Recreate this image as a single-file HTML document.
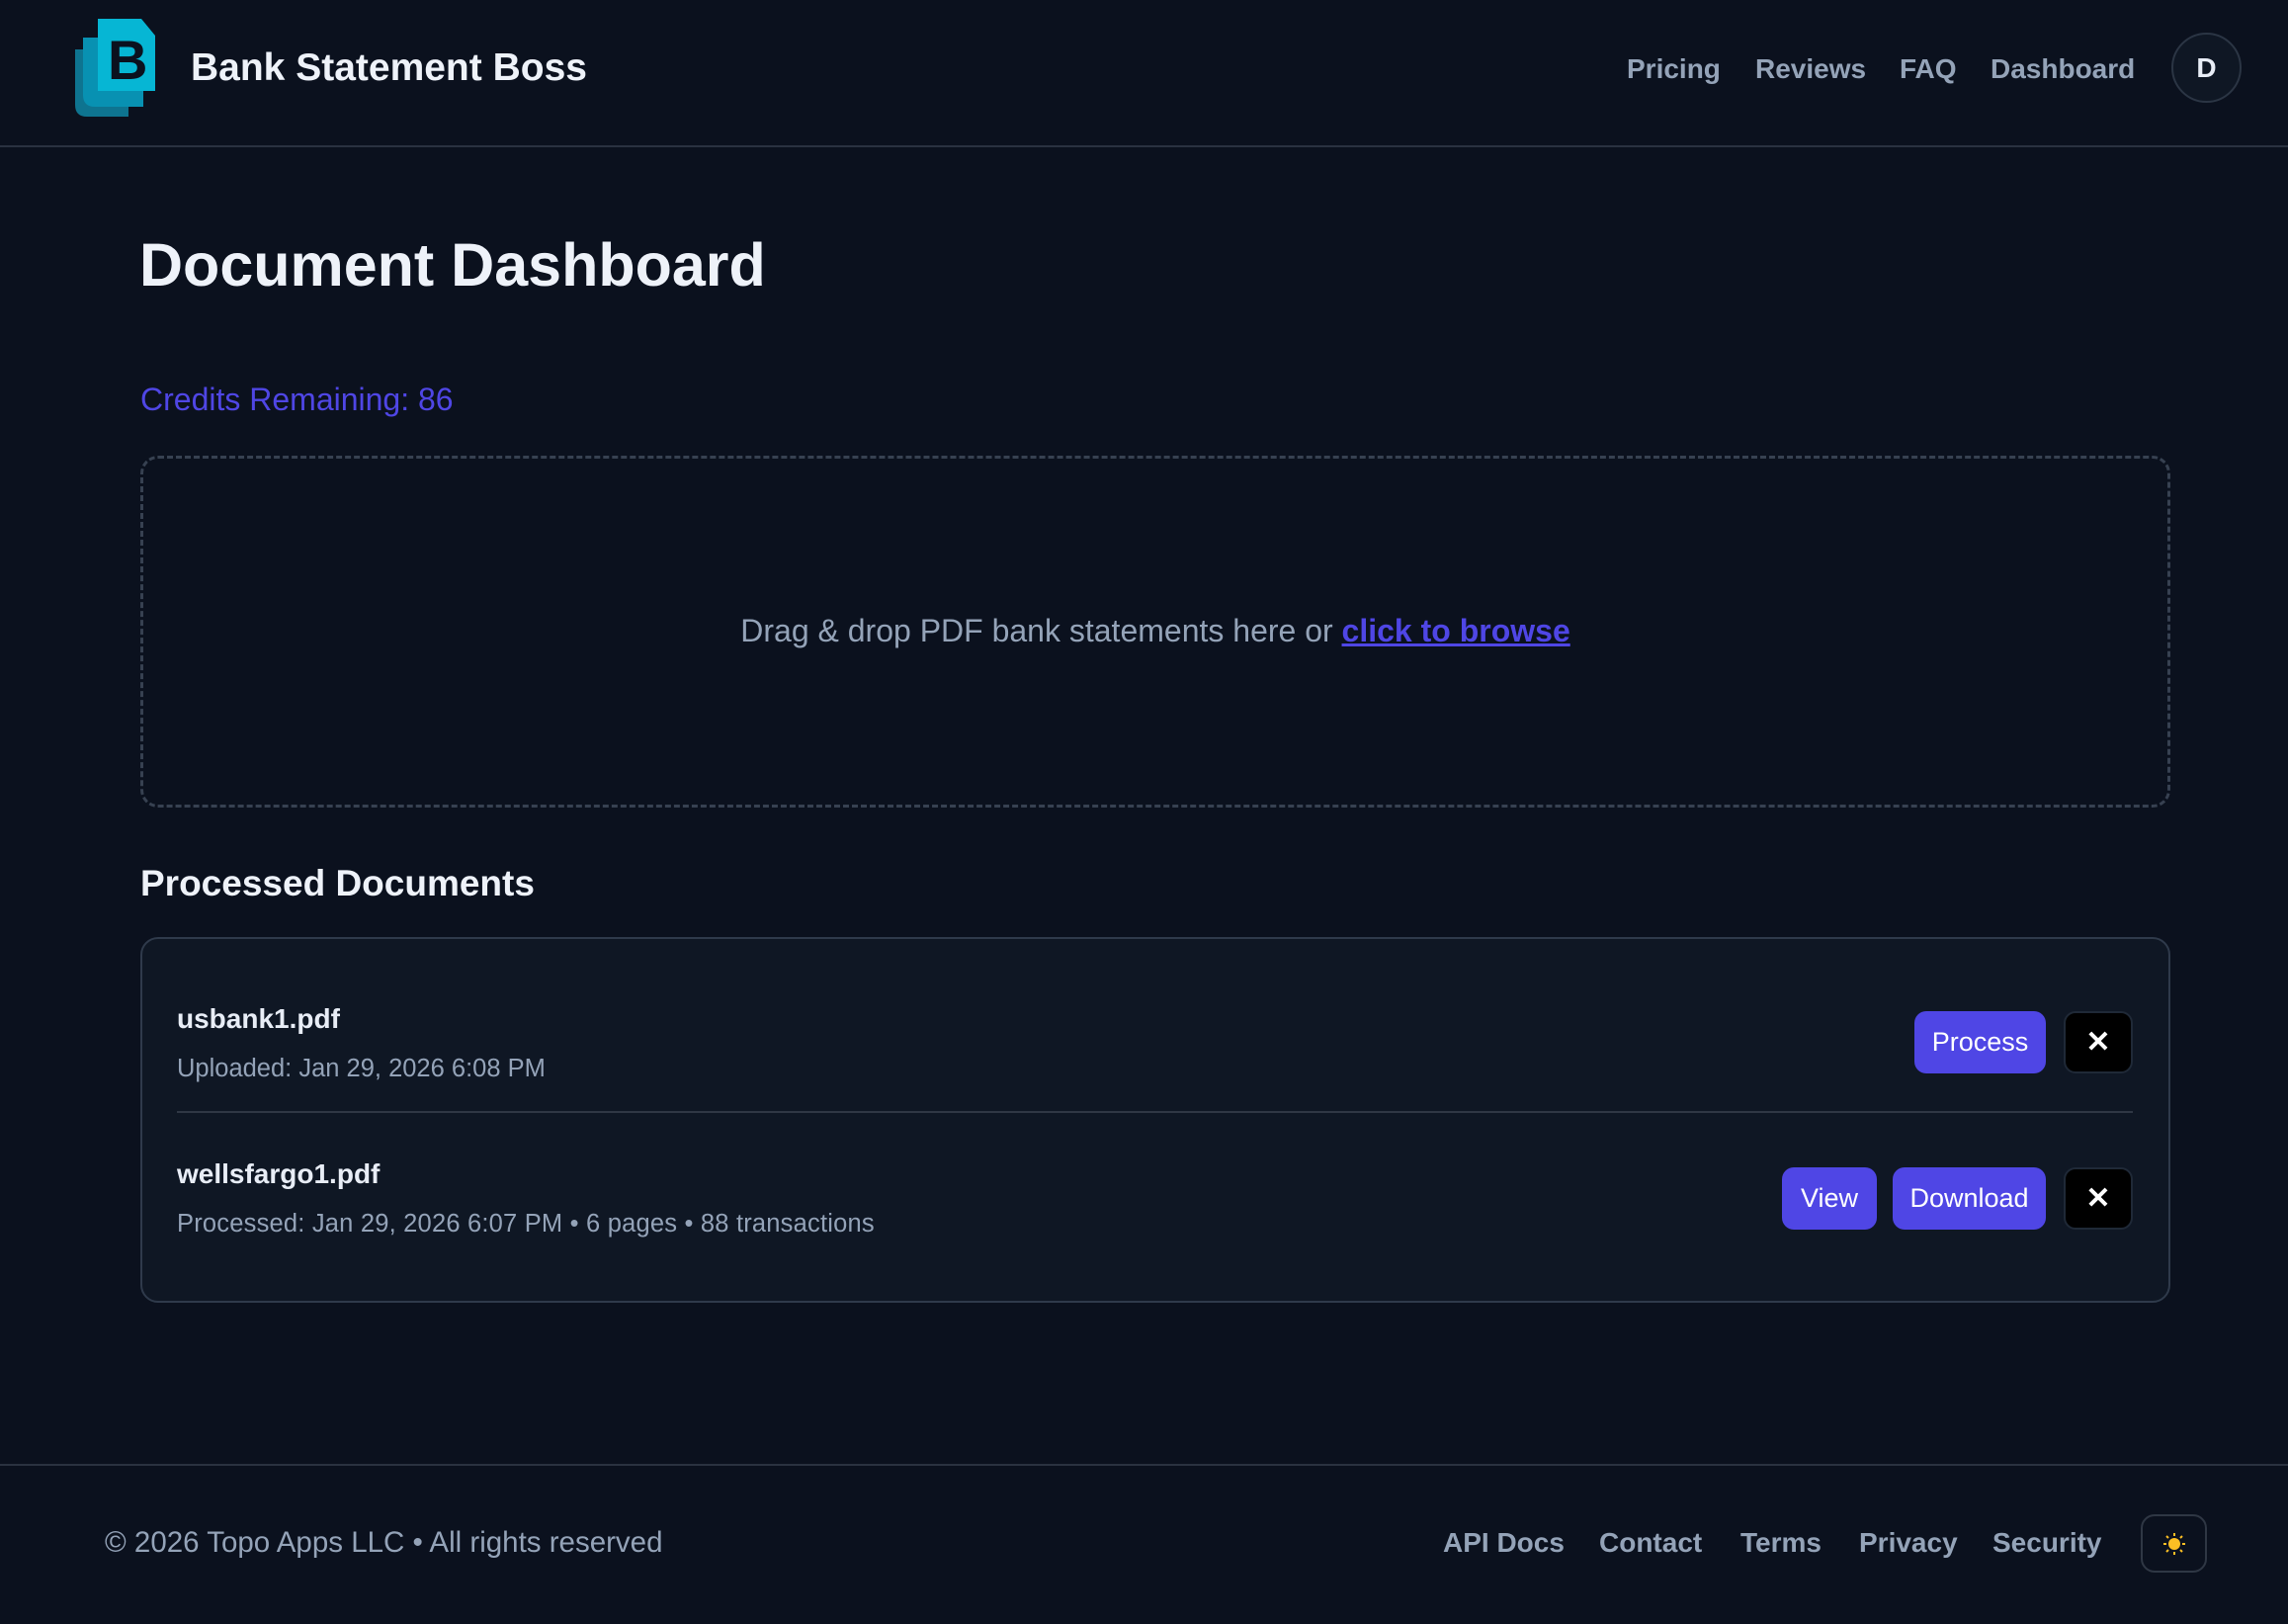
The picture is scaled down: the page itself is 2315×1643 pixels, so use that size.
<!DOCTYPE html>
<html><head><meta charset="utf-8"><style>
*{margin:0;padding:0;box-sizing:border-box}
html,body{width:2315px;height:1643px;background:#0b111e;overflow:hidden;font-family:"Liberation Sans",Arial,sans-serif;color:#e8edf6}
.a{position:absolute;white-space:nowrap}
.nav{color:#94a3b8;font-weight:bold;font-size:28px;top:54px}
.btn{position:absolute;background:#4f46e5;color:#fff;border-radius:12px;font-size:27px;display:flex;align-items:center;justify-content:center}
.x{position:absolute;background:#000;border:2px solid #1f2937;border-radius:12px;color:#fff;font-size:30px;font-weight:bold;display:flex;align-items:center;justify-content:center}
.fl{color:#94a3b8;font-weight:bold;font-size:28px;top:1545px}
</style></head><body>
<svg class="a" style="left:70px;top:15px" width="100" height="110" viewBox="70 15 100 110">
<path d="M76 50 H90 V100 H130 V118 H88 Q76 118 76 106 Z" fill="#0e7490"/>
<path d="M84 38 H99 V92 H145 V108 H96 Q84 108 84 96 Z" fill="#0891b2"/>
<path d="M99 19 H143 L157 36 V92 H99 Z" fill="#06b6d4"/>
<text x="109" y="80" font-family="Liberation Sans" font-weight="bold" font-size="56" fill="#0b111e">B</text>
</svg>
<div class="a" style="left:193px;top:47px;font-size:39px;font-weight:bold;color:#eef2f9">Bank Statement Boss</div>
<div class="a nav" style="left:1646px">Pricing</div>
<div class="a nav" style="left:1776px">Reviews</div>
<div class="a nav" style="left:1922px">FAQ</div>
<div class="a nav" style="left:2014px">Dashboard</div>
<div class="a" style="left:2197px;top:33px;width:71px;height:71px;border-radius:50%;border:2px solid #2b3544;background:#0f1724;display:flex;align-items:center;justify-content:center;font-weight:bold;font-size:28px">D</div>
<div class="a" style="left:0;top:147px;width:2315px;height:2px;background:#2a3240"></div>

<div class="a" style="left:141px;top:233px;font-size:61px;font-weight:bold;color:#eef2f9">Document Dashboard</div>
<div class="a" style="left:142px;top:386px;font-size:32px;color:#4f46e5">Credits Remaining: 86</div>
<div class="a" style="left:142px;top:461px;width:2054px;height:356px;border:3px dashed #374151;border-radius:18px"></div>
<div class="a" style="left:142px;top:620px;width:2054px;text-align:center;font-size:32px;color:#94a3b8">Drag &amp; drop PDF bank statements here or <span style="color:#4f46e5;font-weight:bold;text-decoration:underline">click to browse</span></div>

<div class="a" style="left:142px;top:873px;font-size:37px;font-weight:bold;color:#eef2f9">Processed Documents</div>
<div class="a" style="left:142px;top:948px;width:2054px;height:370px;border:2px solid #2f3a4b;border-radius:18px;background:#0f1724"></div>
<div class="a" style="left:179px;top:1015px;font-size:28px;font-weight:bold">usbank1.pdf</div>
<div class="a" style="left:179px;top:1067px;font-size:25.5px;color:#94a3b8">Uploaded: Jan 29, 2026 6:08 PM</div>
<div class="btn" style="left:1937px;top:1023px;width:133px;height:63px">Process</div>
<div class="x" style="left:2088px;top:1023px;width:70px;height:63px">✕</div>
<div class="a" style="left:179px;top:1124px;width:1979px;height:2px;background:#2f3744"></div>
<div class="a" style="left:179px;top:1172px;font-size:28px;font-weight:bold">wellsfargo1.pdf</div>
<div class="a" style="left:179px;top:1224px;font-size:25.5px;color:#94a3b8;letter-spacing:0.2px">Processed: Jan 29, 2026 6:07 PM • 6 pages • 88 transactions</div>
<div class="btn" style="left:1803px;top:1181px;width:96px;height:63px">View</div>
<div class="btn" style="left:1915px;top:1181px;width:155px;height:63px">Download</div>
<div class="x" style="left:2088px;top:1181px;width:70px;height:63px">✕</div>

<div class="a" style="left:0;top:1481px;width:2315px;height:2px;background:#2a3240"></div>
<div class="a" style="left:106px;top:1544px;font-size:29.5px;color:#94a3b8">© 2026 Topo Apps LLC • All rights reserved</div>
<div class="a fl" style="left:1460px">API Docs</div>
<div class="a fl" style="left:1618px">Contact</div>
<div class="a fl" style="left:1761px">Terms</div>
<div class="a fl" style="left:1881px">Privacy</div>
<div class="a fl" style="left:2016px">Security</div>
<div class="a" style="left:2166px;top:1532px;width:67px;height:59px;border:2px solid #2f3744;border-radius:14px;display:flex;align-items:center;justify-content:center">
<svg width="24" height="24" viewBox="0 0 24 24"><circle cx="12" cy="12" r="6" fill="#fbbf24"/><g stroke="#fbbf24" stroke-width="2"><path d="M12 1v3M12 20v3M1 12h3M20 12h3M4 4l2 2M18 18l2 2M4 20l2-2M18 6l2-2"/></g></svg>
</div>
</body></html>
